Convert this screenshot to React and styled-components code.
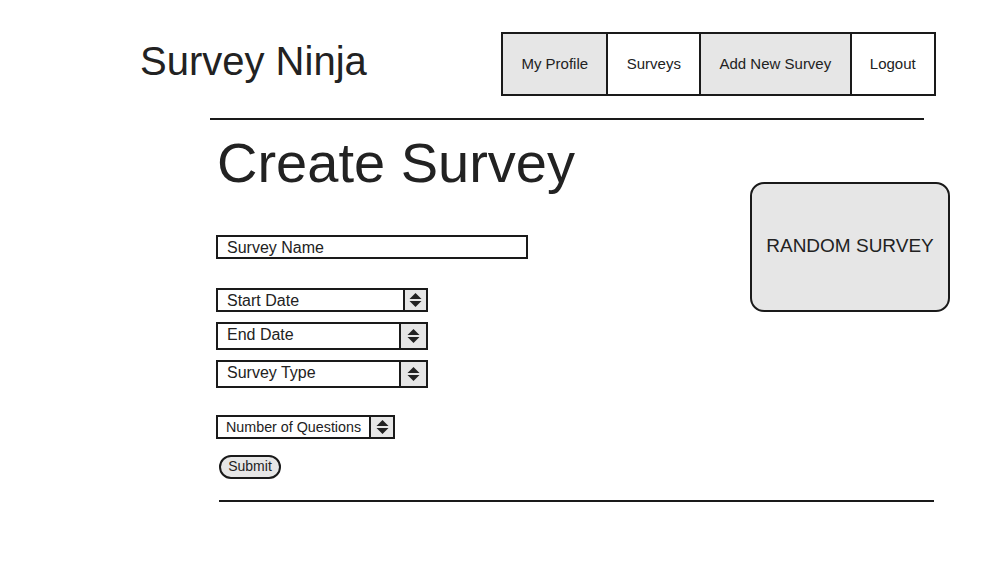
import React from "react";
import styled, { createGlobalStyle } from "styled-components";

const GlobalStyle = createGlobalStyle`
  body {
    margin: 0;
    background: #fff;
    font-family: "Liberation Sans", Arial, sans-serif;
    color: #222;
  }
`;

const navItems = [
  { label: "My Profile", shaded: true },
  { label: "Surveys" },
  { label: "Add New Survey", shaded: true },
  { label: "Logout" }
];

const ArrowIcon = () => (
  <svg width="13" height="16" viewBox="0 0 13 16">
    <path d="M0.5 7 L6.5 1 L12.5 7 Z" fill="#222" />
    <path d="M0.5 9 L6.5 15 L12.5 9 Z" fill="#222" />
  </svg>
);

const SelectBox = ({ label, width, height, arrowWidth, small, tall }) => (
  <Select style={{ width, height }}>
    <SelectText small={small} tall={tall}>
      {label}
    </SelectText>
    <ArrowBox style={{ width: arrowWidth }}>
      <ArrowIcon />
    </ArrowBox>
  </Select>
);

export default function App() {
  return (
    <Page>
      <GlobalStyle />
      <Header>
        <Brand>Survey Ninja</Brand>
        <Nav>
          {navItems.map(item => (
            <NavItem key={item.label} shaded={item.shaded}>
              {item.label}
            </NavItem>
          ))}
        </Nav>
      </Header>
      <TopRule />
      <Main>
        <FormColumn>
          <Title>Create Survey</Title>
          <TextInput>Survey Name</TextInput>
          <SelectGroup>
            <SelectBox label="Start Date" width={212} height={24} arrowWidth={21} />
            <SelectBox label="End Date" width={212} height={28} arrowWidth={25} tall />
            <SelectBox label="Survey Type" width={212} height={28} arrowWidth={25} tall />
          </SelectGroup>
          <QuestionsRow>
            <SelectBox label="Number of Questions" width={179} height={24} arrowWidth={22} small />
          </QuestionsRow>
          <SubmitButton>Submit</SubmitButton>
        </FormColumn>
        <RandomCard>RANDOM SURVEY</RandomCard>
      </Main>
      <BottomRule />
    </Page>
  );
}

const Page = styled.div`
  width: 992px;
  min-height: 588px;
`;

// header

const Header = styled.header`
  display: flex;
  align-items: center;
  justify-content: space-between;
  padding: 32px 56px 0 140px;
`;

const Brand = styled.div`
  font-size: 40px;
  line-height: 46px;
  color: #222;
  margin-top: -7px;
`;

const Nav = styled.nav`
  display: flex;
  height: 60px;
  border: 2px solid #1a1a1a;
`;

const NavItem = styled.div`
  display: flex;
  align-items: center;
  padding: 0 18.3px 2px;
  font-size: 15px;
  color: #222;
  background: ${props => (props.shaded ? "#e6e6e6" : "#fff")};

  & + & {
    border-left: 2px solid #1a1a1a;
  }
`;

const TopRule = styled.div`
  height: 2px;
  width: 714px;
  margin: 22px 0 0 210px;
  background: #1a1a1a;
`;

// main

const Main = styled.main`
  display: grid;
  grid-template-columns: 1fr 200px;
  padding: 0 42px 0 216px;
`;

const FormColumn = styled.div`
  display: flex;
  flex-direction: column;
  align-items: flex-start;
`;

const Title = styled.h1`
  margin: 11px 0 2px 1px;
  font-size: 56px;
  font-weight: normal;
  line-height: 64px;
  color: #222;
`;

const TextInput = styled.div`
  box-sizing: border-box;
  width: 312px;
  height: 24px;
  margin-top: 38px;
  padding: 1px 0 0 9px;
  border: 2px solid #1a1a1a;
  font-size: 16px;
  line-height: 20px;
  color: #222;
`;

const SelectGroup = styled.div`
  display: flex;
  flex-direction: column;
  gap: 10px;
  margin-top: 29px;
`;

const Select = styled.div`
  box-sizing: border-box;
  display: flex;
  border: 2px solid #1a1a1a;
  background: #fff;
`;

const SelectText = styled.div`
  flex: 1;
  display: flex;
  align-items: center;
  padding-left: ${props => (props.small ? "8px" : "9px")};
  padding-top: ${props => (props.small || props.tall ? "0" : "1px")};
  padding-bottom: ${props => (props.tall ? "3px" : props.small ? "1px" : "0")};
  font-size: ${props => (props.small ? "14.3px" : "16px")};
  color: #222;
`;

const ArrowBox = styled.div`
  display: flex;
  align-items: center;
  justify-content: center;
  border-left: 2px solid #1a1a1a;
  background: #e6e6e6;
`;

const QuestionsRow = styled.div`
  margin-top: 27px;
`;

const SubmitButton = styled.button`
  box-sizing: border-box;
  width: 62px;
  height: 24px;
  margin: 16px 0 0 3px;
  padding: 0 0 2px;
  border: 2px solid #1a1a1a;
  border-radius: 12px;
  background: #e6e6e6;
  font-family: "Liberation Sans", Arial, sans-serif;
  font-size: 14px;
  color: #222;
`;

const RandomCard = styled.div`
  box-sizing: border-box;
  width: 200px;
  height: 130px;
  margin-top: 62px;
  padding-bottom: 2px;
  display: flex;
  align-items: center;
  justify-content: center;
  border: 2px solid #1a1a1a;
  border-radius: 14px;
  background: #e6e6e6;
  font-size: 19px;
  color: #222;
`;

const BottomRule = styled.div`
  height: 2px;
  width: 715px;
  margin: 21px 0 0 219px;
  background: #1a1a1a;
`;
